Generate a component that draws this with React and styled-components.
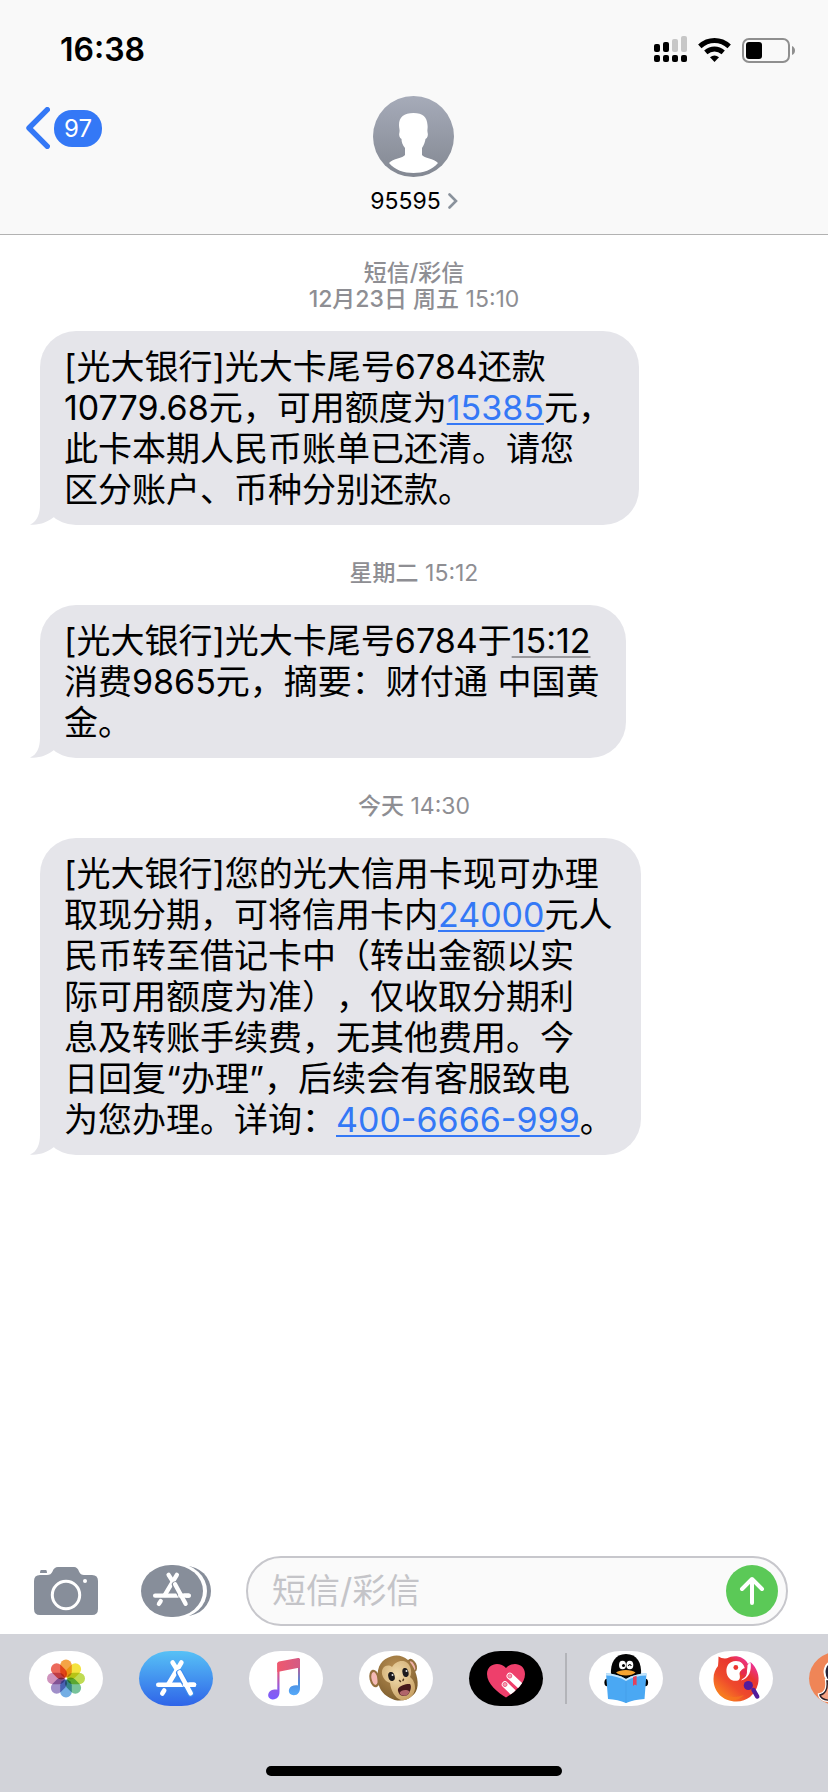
import React from 'react';
import styled, { createGlobalStyle } from 'styled-components';

const GlobalStyle = createGlobalStyle`
  *, *::before, *::after { box-sizing: border-box; }
  body {
    margin: 0;
    background: #fff;
    color: #000;
    font-family: Inter, "Noto Sans CJK SC", sans-serif;
  }
  button, input { font-family: inherit; }
  button { border: 0; padding: 0; background: none; color: inherit; cursor: pointer; }
  svg { display: block; }
`;

const Screen = styled.div`
  display: flex;
  flex-direction: column;
  min-height: 100vh;
  overflow: hidden;
`;

const Header = styled.header`
  background: #f9f9f9;
  border-bottom: 1px solid #b2b2b2;
`;

const StatusBar = styled.div`
  display: flex;
  justify-content: space-between;
  align-items: center;
  height: 96px;
  padding: 3px 33px 0 60px;
`;

const Clock = styled.time`
  font-size: 32px;
  line-height: 40px;
  font-weight: 600;
`;

const StatusIcons = styled.div`
  display: flex;
  align-items: center;
`;

const NavBar = styled.nav`
  display: grid;
  grid-template-columns: 1fr auto 1fr;
  align-items: start;
  padding: 0 26px 20px;
`;

const BackLink = styled.a`
  display: flex;
  align-items: center;
  gap: 4px;
  margin-top: 11px;
  color: #fff;
  text-decoration: none;
`;

const UnreadBadge = styled.span`
  padding: 0 10px;
  border-radius: 18px;
  background: #3478f6;
  font-size: 24px;
  line-height: 37px;
`;

const ContactButton = styled.button`
  display: flex;
  flex-direction: column;
  align-items: center;
  gap: 11px;
`;

const ContactName = styled.span`
  display: flex;
  align-items: center;
  gap: 7px;
  font-size: 23px;
  line-height: 26px;
`;

const Thread = styled.main`
  flex: 1;
  padding: 25px 40px 35px;
`;

const Stamp = styled.p`
  margin: 0 0 19px;
  color: #8e8e93;
  font-size: 23px;
  line-height: 26px;
  text-align: center;

  * + & { margin-top: 35px; }
`;

const Strong = styled.span`
  font-weight: 500;
`;

const StampLine = styled.span`
  display: block;
`;

const Bubble = styled.div`
  position: relative;
  width: fit-content;
  padding: 15px 27px 15px 24px;
  border-radius: 36px;
  background: #e5e5ea;
  font-size: 34px;
  line-height: 41px;
  text-spacing-trim: space-all;
`;

const Tail = styled.svg`
  position: absolute;
  left: -10px;
  bottom: 0;
`;

const Line = styled.span`
  display: block;
  white-space: nowrap;
`;

const DataLink = styled.a`
  color: ${({ $plain }) => ($plain ? '#000' : '#3478f6')};
  text-decoration-line: underline;
  text-decoration-thickness: 2px;
  text-decoration-color: ${({ $plain }) => ($plain ? '#9a9a9f' : '#3478f6')};
  text-underline-offset: 3px;
  text-decoration-skip-ink: none;
`;

const Composer = styled.form`
  display: flex;
  align-items: center;
  padding: 0 40px 8px 34px;
`;

const ToolButton = styled.button`
  flex: none;
  margin-right: ${({ $gap }) => $gap}px;
`;

const Field = styled.div`
  flex: 1;
  display: flex;
  align-items: center;
  min-width: 0;
  height: 70px;
  padding: 0 8px 0 24px;
  border: 2px solid #c7c7cc;
  border-radius: 35px;
  background: #fafafa;
`;

const MessageInput = styled.input`
  flex: 1;
  min-width: 0;
  padding: 0;
  border: 0;
  outline: 0;
  background: none;
  font-size: 34px;
  line-height: 40px;

  &::placeholder { color: #c4c4c8; opacity: 1; }
`;

const SendButton = styled.button`
  flex: none;
  border-radius: 50%;
  background: #5bc957;
`;

const Dock = styled.footer`
  background: #d2d3d9;
`;

const AppRow = styled.div`
  display: flex;
  align-items: center;
  padding: 17px 0 60px 29px;
  gap: 36px;
  overflow: hidden;
`;

const AppButton = styled.button`
  flex: none;
  width: 74px;
  height: 55px;
  overflow: hidden;
  border-radius: 32px / 28px;
  background: ${({ $bg }) => $bg || '#fff'};
`;

const Divider = styled.span`
  flex: none;
  width: 2px;
  height: 51px;
  margin: 0 -14px;
  background: #b3b4b9;
`;

const HomeIndicator = styled.div`
  width: 296px;
  height: 10px;
  margin: 0 auto 16px;
  border-radius: 5px;
  background: #000;
`;

const bars = [[0, 8, 8], [9, 6, 10], [18, 3, 13], [27, 0, 16]];

function StatusGlyphs() {
  return (
    <StatusIcons>
      <svg width="141" height="28" viewBox="0 0 141 28" role="img" aria-label="信号、无线局域网、电池">
        {bars.map(([x, y, h], i) => (
          <g key={x}>
            <rect x={x} y={y} width="6" height={h} rx="2" fill={i > 1 ? '#c7c7c7' : '#000'} />
            <rect x={x} y="19" width="6" height="7" rx="2" />
          </g>
        ))}
        <g fill="none" stroke="#000" strokeWidth="5">
          <path d="M45.800 10.300 C54.500 2.500 66.500 2.500 75.200 10.300" />
          <path d="M51.800 16.300 C57 11.900 64 11.900 69.200 16.300" />
        </g>
        <path d="M56 21.200 Q60.500 18 65 21.200 L60.500 26 Z" />
        <rect x="89" y="3" width="46" height="23" rx="6" fill="none" stroke="#8f8f8f" strokeWidth="2" />
        <rect x="92" y="6" width="16" height="17" rx="3" />
        <path d="M138 10 Q141 11.500 141 14.500 Q141 17.500 138 19 Z" fill="#8f8f8f" />
      </svg>
    </StatusIcons>
  );
}

function Avatar() {
  return (
    <svg width="81" height="81" viewBox="0 0 81 81" aria-hidden="true">
      <defs>
        <linearGradient id="avatar" x1="0" y1="0" x2="0" y2="1">
          <stop offset="0" stopColor="#a6abb9" />
          <stop offset="1" stopColor="#838892" />
        </linearGradient>
      </defs>
      <circle cx="40.500" cy="40.500" r="40.500" fill="url(#avatar)" />
      <path
        fill="#fff"
        d="M40.500 17C31 17 26 21 26 29C26 32 27 34 26.500 36C25.500 39 26.500 42 28.500 43C28.500 46 29.500 49 32 52V59C30 62 20 62.500 16 67C22 74 31 77 40.500 77S59 74 65 67C61 62.500 51 62 49 59V52C51 49 52 46 52.500 43C54.500 42 55.500 39 54.500 36C54 34 55 32 54.500 29C54 21 50 17 40.500 17Z"
      />
    </svg>
  );
}

function StoreGlyph({ cut }) {
  return (
    <g fill="none" strokeLinecap="round" stroke="#fff" strokeWidth="4.600">
      <path d="M19.300 33.700H55" />
      <path d="M33.600 11.500L38 18.500" />
      <path d="M42.400 11.500L29.500 33" />
      <path d="M25.200 39.500L23.300 42.500" />
      <path d="M40.500 22L51.700 42.300" stroke={cut} strokeWidth="7" />
      <path d="M40.500 21.500L51.700 42.300" />
      <path d="M46 33.700H55" />
    </g>
  );
}

const petals = ['#f5a445', '#f4e33f', '#bfdb52', '#78c39a', '#74aee4', '#a08fc9', '#cf93bd', '#ec6a5c'];

const PetalSvg = styled.svg`
  isolation: isolate;

  rect { mix-blend-mode: multiply; }
`;

function PhotosIcon() {
  return (
    <PetalSvg width="74" height="55" viewBox="0 0 74 55" aria-hidden="true">
      {petals.map((color, i) => (
        <rect
          key={color}
          x="31.200"
          y="8.500"
          width="11.600"
          height="18"
          rx="5.800"
          fill={color}
          transform={`rotate(${i * 45} 37 27.500)`}
        />
      ))}
    </PetalSvg>
  );
}

function StoreIcon() {
  return (
    <svg width="74" height="55" viewBox="0 0 74 55" aria-hidden="true">
      <StoreGlyph cut="#3c8bee" />
    </svg>
  );
}

function MusicIcon() {
  return (
    <svg width="74" height="55" viewBox="0 0 74 55" aria-hidden="true">
      <defs>
        <linearGradient id="noteLeft" x1="0" y1="0" x2="0" y2="1">
          <stop offset="0.250" stopColor="#e5557d" />
          <stop offset="0.700" stopColor="#8d5be8" />
          <stop offset="1" stopColor="#7a5cff" />
        </linearGradient>
        <linearGradient id="noteRight" x1="0" y1="0" x2="0" y2="1">
          <stop offset="0.200" stopColor="#c45c93" />
          <stop offset="0.650" stopColor="#4c8ee0" />
          <stop offset="1" stopColor="#55aafa" />
        </linearGradient>
        <linearGradient id="beam" x1="0" y1="0" x2="1" y2="0">
          <stop offset="0" stopColor="#f0586d" />
          <stop offset="1" stopColor="#d35a85" />
        </linearGradient>
      </defs>
      <path d="M28.300 12V38.800C27 38.300 24 38.400 22 39.600C18 41.800 18 48 23.500 48.400C28 48.600 30.500 45.500 30.500 41V12Z" fill="url(#noteLeft)" />
      <path d="M49 8V34.500C47.500 34 44.500 34.200 42.500 35.300C38.500 37.800 39 44 44.500 44.200C49 44.300 51 41 51 37V8Z" fill="url(#noteRight)" />
      <path d="M28.300 12.500Q28.300 11 30 10.600L49 7Q51 6.600 51 8.500V16.500L28.300 21Z" fill="url(#beam)" />
    </svg>
  );
}

function MonkeyIcon() {
  return (
    <svg width="74" height="55" viewBox="0 0 74 55" aria-hidden="true">
      <defs>
        <radialGradient id="fur" cx="0.450" cy="0.300" r="0.700">
          <stop offset="0" stopColor="#bd9255" />
          <stop offset="1" stopColor="#80602f" />
        </radialGradient>
        <radialGradient id="muzzle" cx="0.450" cy="0.350" r="0.700">
          <stop offset="0" stopColor="#f2dcae" />
          <stop offset="1" stopColor="#c9a265" />
        </radialGradient>
      </defs>
      <ellipse cx="15.500" cy="27.500" rx="5" ry="9" transform="rotate(-12 15.500 27.500)" fill="#94703f" />
      <ellipse cx="15.500" cy="27.500" rx="3" ry="6.500" transform="rotate(-12 15.500 27.500)" fill="#f4b9b4" />
      <ellipse cx="53" cy="14.500" rx="4.500" ry="7" transform="rotate(-25 53 14.500)" fill="#94703f" />
      <ellipse cx="53" cy="15" rx="2.600" ry="5" transform="rotate(-25 53 15)" fill="#efb1aa" />
      <path d="M32 5.500C43 2 52 9 56 20C60 30 60 40 53 45C47 51 37 50.500 31 47C23 43 19 36 18.500 27C18 15 23 8 32 5.500Z" fill="url(#fur)" />
      <path d="M33 16C28 12 20 17 24 26C26 30 29 31 31 32C32 40 36 47 42 49C49 50 55 45 56 38C56.500 33 54 28 51 26C54 21 51 12 46 10.500C40 9 36 12 33 16Z" fill="url(#muzzle)" />
      <ellipse cx="32.500" cy="25.500" rx="3.200" ry="4.600" transform="rotate(-14 32.500 25.500)" fill="#1c1a1d" />
      <ellipse cx="46.500" cy="21.500" rx="3" ry="4.600" transform="rotate(-14 46.500 21.500)" fill="#1c1a1d" />
      <circle cx="33.500" cy="24" r="1" fill="#e6e6e6" />
      <circle cx="47.500" cy="20" r="1" fill="#e6e6e6" />
      <path d="M40.500 29.500L41.500 30.500M44.500 28.300L44 29.500" stroke="#4f351e" strokeWidth="1.500" strokeLinecap="round" />
      <path d="M39 38C41 34 48 32.500 51 33C53 35 51.500 41 49 43.500C46 46 41 45 40 42.500C39.500 41 38.500 39.500 39 38Z" fill="#45191c" />
      <path d="M40.500 42C42 39 47.500 38 50.500 40.500Q50 42.500 48.500 43.800C46 45.500 41.500 45 40.500 42Z" fill="#b0646a" />
    </svg>
  );
}

function TouchIcon() {
  return (
    <svg width="74" height="55" viewBox="0 0 74 55" aria-hidden="true">
      <defs>
        <clipPath id="heart">
          <path d="M37 46.500C29 41.500 18 33 18 23C18 12 31 10 37 17C43 10 56 12 56 23C56 33 45 41.500 37 46.500Z" />
        </clipPath>
      </defs>
      <g clipPath="url(#heart)">
        <rect width="74" height="55" fill="#ee3f6b" />
        <g stroke="#fff" strokeWidth="6.500" strokeLinecap="round">
          <path d="M40.800 25L58 41" />
          <path d="M36 33.500L52 49" />
        </g>
        <g fill="#f59bb0" stroke="#ee5f83" strokeWidth="1">
          <circle cx="40.800" cy="25" r="2" />
          <circle cx="36" cy="33.500" r="2" />
        </g>
      </g>
    </svg>
  );
}

function ReaderIcon() {
  return (
    <svg width="74" height="55" viewBox="0 0 74 55" aria-hidden="true">
      <path d="M22 24C21 12 26 3 37 3S53 12 52 24L37 31Z" fill="#050505" />
      <ellipse cx="33.500" cy="14" rx="3.500" ry="4.300" fill="#fff" />
      <ellipse cx="40.800" cy="14" rx="3.500" ry="4.300" fill="#fff" />
      <circle cx="34.500" cy="14.500" r="1.500" />
      <path d="M39.300 15Q40.800 12 42.300 15" fill="none" stroke="#000" strokeWidth="1.200" />
      <path d="M27 21.500C31 18 43 18 46.500 21.500C43 25.500 31 25.500 27 21.500Z" fill="#f6a431" />
      <ellipse cx="18" cy="31.500" rx="2.600" ry="3.800" />
      <ellipse cx="56.500" cy="31.500" rx="2.600" ry="3.800" />
      <path d="M17 22.500Q28 22.500 37 28Q46 22.500 57.500 22.500L55.500 48Q45 48.500 37 52Q29 48.500 19 48Z" fill="#4aa8f3" />
      <path d="M17 22.500Q28 22.500 37 28Q46 22.500 57.500 22.500V24.500Q46 24.500 37 30Q28 24.500 17 24.500Z" fill="#c5e5fb" />
      <path d="M37 30V52" stroke="#459fea" />
      <path d="M44 26L47.600 24.800V34.500L45.800 33.500L44 35Z" fill="#e3405c" />
    </svg>
  );
}

function ParrotIcon() {
  return (
    <svg width="74" height="55" viewBox="0 0 74 55" aria-hidden="true">
      <defs>
        <linearGradient id="plume" x1="0.150" y1="0.950" x2="0.900" y2="0.050">
          <stop offset="0" stopColor="#fb8a1f" />
          <stop offset="0.350" stopColor="#ee4a2c" />
          <stop offset="0.680" stopColor="#e8352f" />
          <stop offset="1" stopColor="#f02fc0" />
        </linearGradient>
      </defs>
      <path d="M19.500 5.500Q23 8 28 7.300C35 3.500 45 5 49 13L51.500 11C58 17 61 25 59 33C56 44 48 50.500 37.500 50.500C24 50.500 14.500 41 14.500 28C14.500 22 16.500 18 19 15Q19.500 10 19.500 5.500Z" fill="url(#plume)" />
      <path d="M17 37Q28 50 45 44Q38 52 27 48Q20 45 17 37Z" fill="#f77a1e" opacity="0.600" />
      <path d="M37 10C30 10 27 15 27.500 21C28 27 33 31 39 29.500C41.500 28.500 41 25 40.500 23C40.500 20 43 18.500 46 18.500C45 13 42 10 37 10Z" fill="#fff" />
      <path d="M51.500 11C53 19 50 28 42 29.500C46 26 48.500 21 48.500 14Z" fill="#fff" />
      <path d="M47 17C43 17 41 20 42 24L46.500 23.500Q44 25.500 43.500 28C48 26 49 21 47 17Z" fill="#e52b50" />
      <circle cx="36.800" cy="16.500" r="2.400" fill="#ec352f" />
      <path d="M54.500 39L58.200 45.500" stroke="#521c9c" strokeWidth="4.500" strokeLinecap="round" />
      <circle cx="49.300" cy="34.500" r="4.600" fill="#521c9c" />
    </svg>
  );
}

function CartoonIcon() {
  return (
    <svg width="74" height="55" viewBox="0 0 74 55" aria-hidden="true">
      <path d="M24 10C16 12 13 21 18 29L28 32V8Z" fill="#252238" stroke="#fff" strokeWidth="2" />
      <path d="M18 30C19 38 16 43 11 44C12 49 18 50 28 49V30Z" fill="#f4a183" stroke="#fff" strokeWidth="4" />
      <path d="M18 30C19 38 16 43 11 44C12 49 18 50 28 49V30Z" fill="#f4a183" stroke="#2b1d24" strokeWidth="1.500" />
    </svg>
  );
}

function Message({ children }) {
  return (
    <Bubble>
      <Tail width="30" height="36" viewBox="0 0 30 36" aria-hidden="true">
        <path d="M10 0V16C10 25 7 33 0 35.500C9 36.500 18 33 24 28L30 12Z" fill="#e5e5ea" />
      </Tail>
      {children}
    </Bubble>
  );
}

export default function App() {
  return (
    <Screen lang="zh-CN">
      <GlobalStyle />
      <Header>
        <StatusBar>
          <Clock>16:38</Clock>
          <StatusGlyphs />
        </StatusBar>
        <NavBar>
          <BackLink href="#inbox" aria-label="返回，97条未读">
            <svg width="24" height="42" viewBox="0 0 24 42" aria-hidden="true">
              <path d="M21.300 2.700L3 21L21.300 39.300" fill="none" stroke="#3478f6" strokeWidth="5.400" strokeLinecap="round" strokeLinejoin="round" />
            </svg>
            <UnreadBadge>97</UnreadBadge>
          </BackLink>
          <ContactButton type="button">
            <Avatar />
            <ContactName>
              95595
              <svg width="10" height="16" viewBox="0 0 10 16" aria-hidden="true">
                <path d="M1.500 1.500L8 8L1.500 14.500" fill="none" stroke="#8a929c" strokeWidth="2.600" strokeLinecap="round" />
              </svg>
            </ContactName>
          </ContactButton>
        </NavBar>
      </Header>

      <Thread>
        <Stamp>
          <StampLine><Strong>短信/彩信</Strong></StampLine>
          <StampLine><Strong>12月23日 周五</Strong> 15:10</StampLine>
        </Stamp>
        <Message>
          <Line>[光大银行]光大卡尾号6784还款</Line>
          <Line>10779.68元，可用额度为<DataLink href="#amount-15385">15385</DataLink>元，</Line>
          <Line>此卡本期人民币账单已还清。请您</Line>
          <Line>区分账户、币种分别还款。</Line>
        </Message>

        <Stamp><Strong>星期二</Strong> 15:12</Stamp>
        <Message>
          <Line>[光大银行]光大卡尾号6784于<DataLink $plain href="#time">15:12</DataLink></Line>
          <Line>消费9865元，摘要：财付通 中国黄</Line>
          <Line>金。</Line>
        </Message>

        <Stamp><Strong>今天</Strong> 14:30</Stamp>
        <Message>
          <Line>[光大银行]您的光大信用卡现可办理</Line>
          <Line>取现分期，可将信用卡内<DataLink href="#amount-24000">24000</DataLink>元人</Line>
          <Line>民币转至借记卡中（转出金额以实</Line>
          <Line>际可用额度为准），仅收取分期利</Line>
          <Line>息及转账手续费，无其他费用。今</Line>
          <Line>日回复“办理”，后续会有客服致电</Line>
          <Line>为您办理。详询：<DataLink href="tel:4006666999">400-6666-999</DataLink>。</Line>
        </Message>
      </Thread>

      <Composer onSubmit={(event) => event.preventDefault()}>
        <ToolButton type="button" $gap={43} aria-label="相机">
          <svg width="64" height="48" viewBox="0 0 64 48" aria-hidden="true">
            <path d="M7 3H12Q13 3 13 6H6Q6 3 7 3Z" fill="#878e9a" />
            <path d="M6 8H13Q17 8 18.500 4.500Q20 0 24 0H40Q43.500 0 45 4.500Q46.500 8 50 8H58Q64 8 64 14V42Q64 48 58 48H6Q0 48 0 42V14Q0 8 6 8Z" fill="#878e9a" />
            <circle cx="32" cy="28" r="13.700" fill="none" stroke="#fff" strokeWidth="3" />
            <circle cx="51" cy="14" r="2" fill="#fff" />
          </svg>
        </ToolButton>
        <ToolButton type="button" $gap={35} aria-label="App 抽屉">
          <svg width="70" height="52" viewBox="0 0 70 52" aria-hidden="true">
            <rect x="20" y="1" width="50" height="50" rx="25" fill="#878e9a" />
            <rect x="2" y="-1" width="64" height="54" rx="29" ry="27" fill="#fff" />
            <rect width="62" height="52" rx="30" ry="26" fill="#878e9a" />
            <g transform="translate(-4 -1) scale(0.940)">
              <StoreGlyph cut="#878e9a" />
            </g>
          </svg>
        </ToolButton>
        <Field>
          <MessageInput type="text" placeholder="短信/彩信" aria-label="短信/彩信" />
          <SendButton type="submit" aria-label="发送">
            <svg width="52" height="52" viewBox="0 0 52 52" aria-hidden="true">
              <path d="M26 38V14.500M16 24L26 14L36 24" fill="none" stroke="#fff" strokeWidth="4" strokeLinecap="round" strokeLinejoin="round" />
            </svg>
          </SendButton>
        </Field>
      </Composer>

      <Dock>
        <AppRow>
          <AppButton type="button" aria-label="照片"><PhotosIcon /></AppButton>
          <AppButton type="button" aria-label="App Store" $bg="linear-gradient(#57c1f6, #2f64e8)"><StoreIcon /></AppButton>
          <AppButton type="button" aria-label="音乐"><MusicIcon /></AppButton>
          <AppButton type="button" aria-label="拟我表情"><MonkeyIcon /></AppButton>
          <AppButton type="button" aria-label="Digital Touch" $bg="#000"><TouchIcon /></AppButton>
          <Divider />
          <AppButton type="button" aria-label="QQ阅读"><ReaderIcon /></AppButton>
          <AppButton type="button" aria-label="鹦鹉"><ParrotIcon /></AppButton>
          <AppButton type="button" aria-label="贴纸" $bg="#ef8557"><CartoonIcon /></AppButton>
        </AppRow>
        <HomeIndicator />
      </Dock>
    </Screen>
  );
}
